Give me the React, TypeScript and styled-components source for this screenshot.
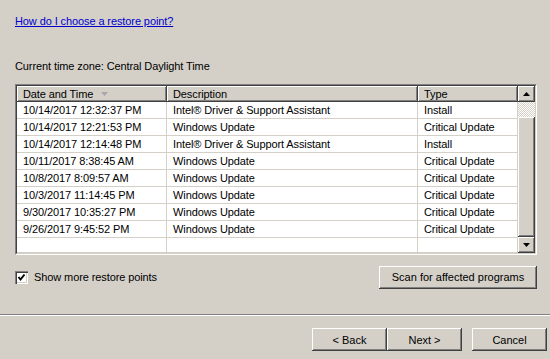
import React from 'react';
import styled, { createGlobalStyle, css } from 'styled-components';

const GlobalStyle = createGlobalStyle`
  html, body {
    margin: 0;
    background: #d4d0c8;
  }
  body {
    font-family: 'Liberation Sans', Arial, sans-serif;
    font-size: 11px;
    letter-spacing: -0.1px;
    color: #000;
  }
`;

const raised = css`
  background: #d4d0c8;
  box-shadow:
    inset -1px -1px #404040,
    inset 1px 1px #fff,
    inset -2px -2px #808080;
`;

const Page = styled.div`
  width: 550px;
  height: 359px;
  display: flex;
  flex-direction: column;
  overflow: hidden;
`;

const Content = styled.div`
  display: flex;
  flex-direction: column;
  width: 522px;
  padding: 15px 0 0 15px;
  line-height: 13px;
`;

const HelpLink = styled.a`
  align-self: flex-start;
  color: #0000cc;
  text-decoration: underline;
  cursor: pointer;
`;

const TimeZone = styled.div`
  margin-top: 32px;
`;

const ListView = styled.div`
  margin-top: 11px;
  border: 1px solid;
  border-color: #808080 #fff #fff #808080;
`;

const ListInner = styled.div`
  display: flex;
  height: 167px;
  background: #fff;
  border: 1px solid;
  border-color: #404040 #d4d0c8 #d4d0c8 #404040;
`;

const Table = styled.div`
  flex: 1;
  display: flex;
  flex-direction: column;
  overflow: hidden;
`;

const columns = '150px 251px 100px';

const HeaderRow = styled.div`
  display: grid;
  grid-template-columns: ${columns};
  height: 16px;
`;

const HeaderCell = styled.div`
  ${raised};
  display: flex;
  align-items: center;
  gap: 8px;
  padding: 0 6px;
  line-height: 16px;
  white-space: nowrap;
`;

const Row = styled.div`
  display: grid;
  grid-template-columns: ${columns};
  height: 17px;
  flex-shrink: 0;
`;

const Cell = styled.div`
  padding: 0 5px 0 6px;
  line-height: 16px;
  border-right: 1px solid #d4d0c8;
  border-bottom: 1px solid #d4d0c8;
  white-space: nowrap;
  overflow: hidden;
`;

const FillerRow = styled(Row)`
  flex: 1;
`;

const ScrollBar = styled.div`
  width: 17px;
  display: flex;
  flex-direction: column;
`;

const ScrollButton = styled.div`
  ${raised};
  height: 16px;
  display: flex;
  align-items: center;
  justify-content: center;
  flex-shrink: 0;
`;

const ScrollTrack = styled.div<{ $size: number }>`
  height: ${({ $size }) => $size}px;
  background: repeating-conic-gradient(#d4d0c8 0 25%, #fff 0 50%) 0 0 / 2px 2px;
`;

const ScrollThumb = styled.div`
  ${raised};
  flex: 1;
`;

const Options = styled.div`
  display: flex;
  align-items: center;
  justify-content: space-between;
  margin-top: 11px;
`;

const CheckLabel = styled.label`
  display: flex;
  align-items: center;
  gap: 6px;
  margin-top: -1px;
`;

const CheckBox = styled.span`
  width: 13px;
  height: 13px;
  box-sizing: border-box;
  background: #fff;
  box-shadow:
    inset 1px 1px #808080,
    inset 2px 2px #404040,
    inset -1px -1px #fff,
    inset -2px -2px #d4d0c8;
  display: flex;
  align-items: center;
  justify-content: center;
`;

const Button = styled.button<{ $width?: number }>`
  ${raised};
  width: ${({ $width }) => $width ?? 75}px;
  height: 23px;
  border: none;
  padding: 0;
  font: inherit;
  color: #000;
`;

const Divider = styled.div`
  margin-top: 25px;
  border-top: 1px solid #808080;
  border-bottom: 1px solid #fff;
  height: 0;
`;

const ButtonBar = styled.div`
  display: flex;
  justify-content: flex-end;
  padding: 12px 3px 0 0;
`;

const Spacer = styled.div`
  width: 10px;
`;

const SortArrow = () => (
  <svg width="7" height="4" viewBox="0 0 7 4">
    <polygon points="0,0 7,0 3.5,4" fill="#a7a6aa" />
  </svg>
);

const Arrow = ({ up }: { up?: boolean }) => (
  <svg width="7" height="4" viewBox="0 0 7 4">
    <polygon points={up ? '0,4 7,4 3.5,0' : '0,0 7,0 3.5,4'} fill="#000" />
  </svg>
);

const CheckMark = () => (
  <svg width="9" height="9" viewBox="0 0 9 9">
    <polyline points="1.5,4 3.5,6.5 7.5,1.5" fill="none" stroke="#000" strokeWidth="2" />
  </svg>
);

const points = [
  ['10/14/2017 12:32:37 PM', 'Intel® Driver & Support Assistant', 'Install'],
  ['10/14/2017 12:21:53 PM', 'Windows Update', 'Critical Update'],
  ['10/14/2017 12:14:48 PM', 'Intel® Driver & Support Assistant', 'Install'],
  ['10/11/2017 8:38:45 AM', 'Windows Update', 'Critical Update'],
  ['10/8/2017 8:09:57 AM', 'Windows Update', 'Critical Update'],
  ['10/3/2017 11:14:45 PM', 'Windows Update', 'Critical Update'],
  ['9/30/2017 10:35:27 PM', 'Windows Update', 'Critical Update'],
  ['9/26/2017 9:45:52 PM', 'Windows Update', 'Critical Update'],
];

const App: React.FC = () => (
  <Page>
    <GlobalStyle />
    <Content>
      <HelpLink>How do I choose a restore point?</HelpLink>
      <TimeZone>Current time zone: Central Daylight Time</TimeZone>
      <ListView>
        <ListInner>
          <Table>
            <HeaderRow>
              <HeaderCell>
                Date and Time <SortArrow />
              </HeaderCell>
              <HeaderCell>Description</HeaderCell>
              <HeaderCell>Type</HeaderCell>
            </HeaderRow>
            {points.map(([date, desc, type]) => (
              <Row key={date}>
                <Cell>{date}</Cell>
                <Cell>{desc}</Cell>
                <Cell>{type}</Cell>
              </Row>
            ))}
            <FillerRow>
              <Cell />
              <Cell />
              <Cell />
            </FillerRow>
          </Table>
          <ScrollBar>
            <ScrollButton>
              <Arrow up />
            </ScrollButton>
            <ScrollTrack $size={15} />
            <ScrollThumb />
            <ScrollButton>
              <Arrow />
            </ScrollButton>
          </ScrollBar>
        </ListInner>
      </ListView>
      <Options>
        <CheckLabel>
          <CheckBox>
            <CheckMark />
          </CheckBox>
          Show more restore points
        </CheckLabel>
        <Button $width={158}>Scan for affected programs</Button>
      </Options>
    </Content>
    <Divider />
    <ButtonBar>
      <Button>&lt; Back</Button>
      <Button>Next &gt;</Button>
      <Spacer />
      <Button>Cancel</Button>
    </ButtonBar>
  </Page>
);

export default App;
